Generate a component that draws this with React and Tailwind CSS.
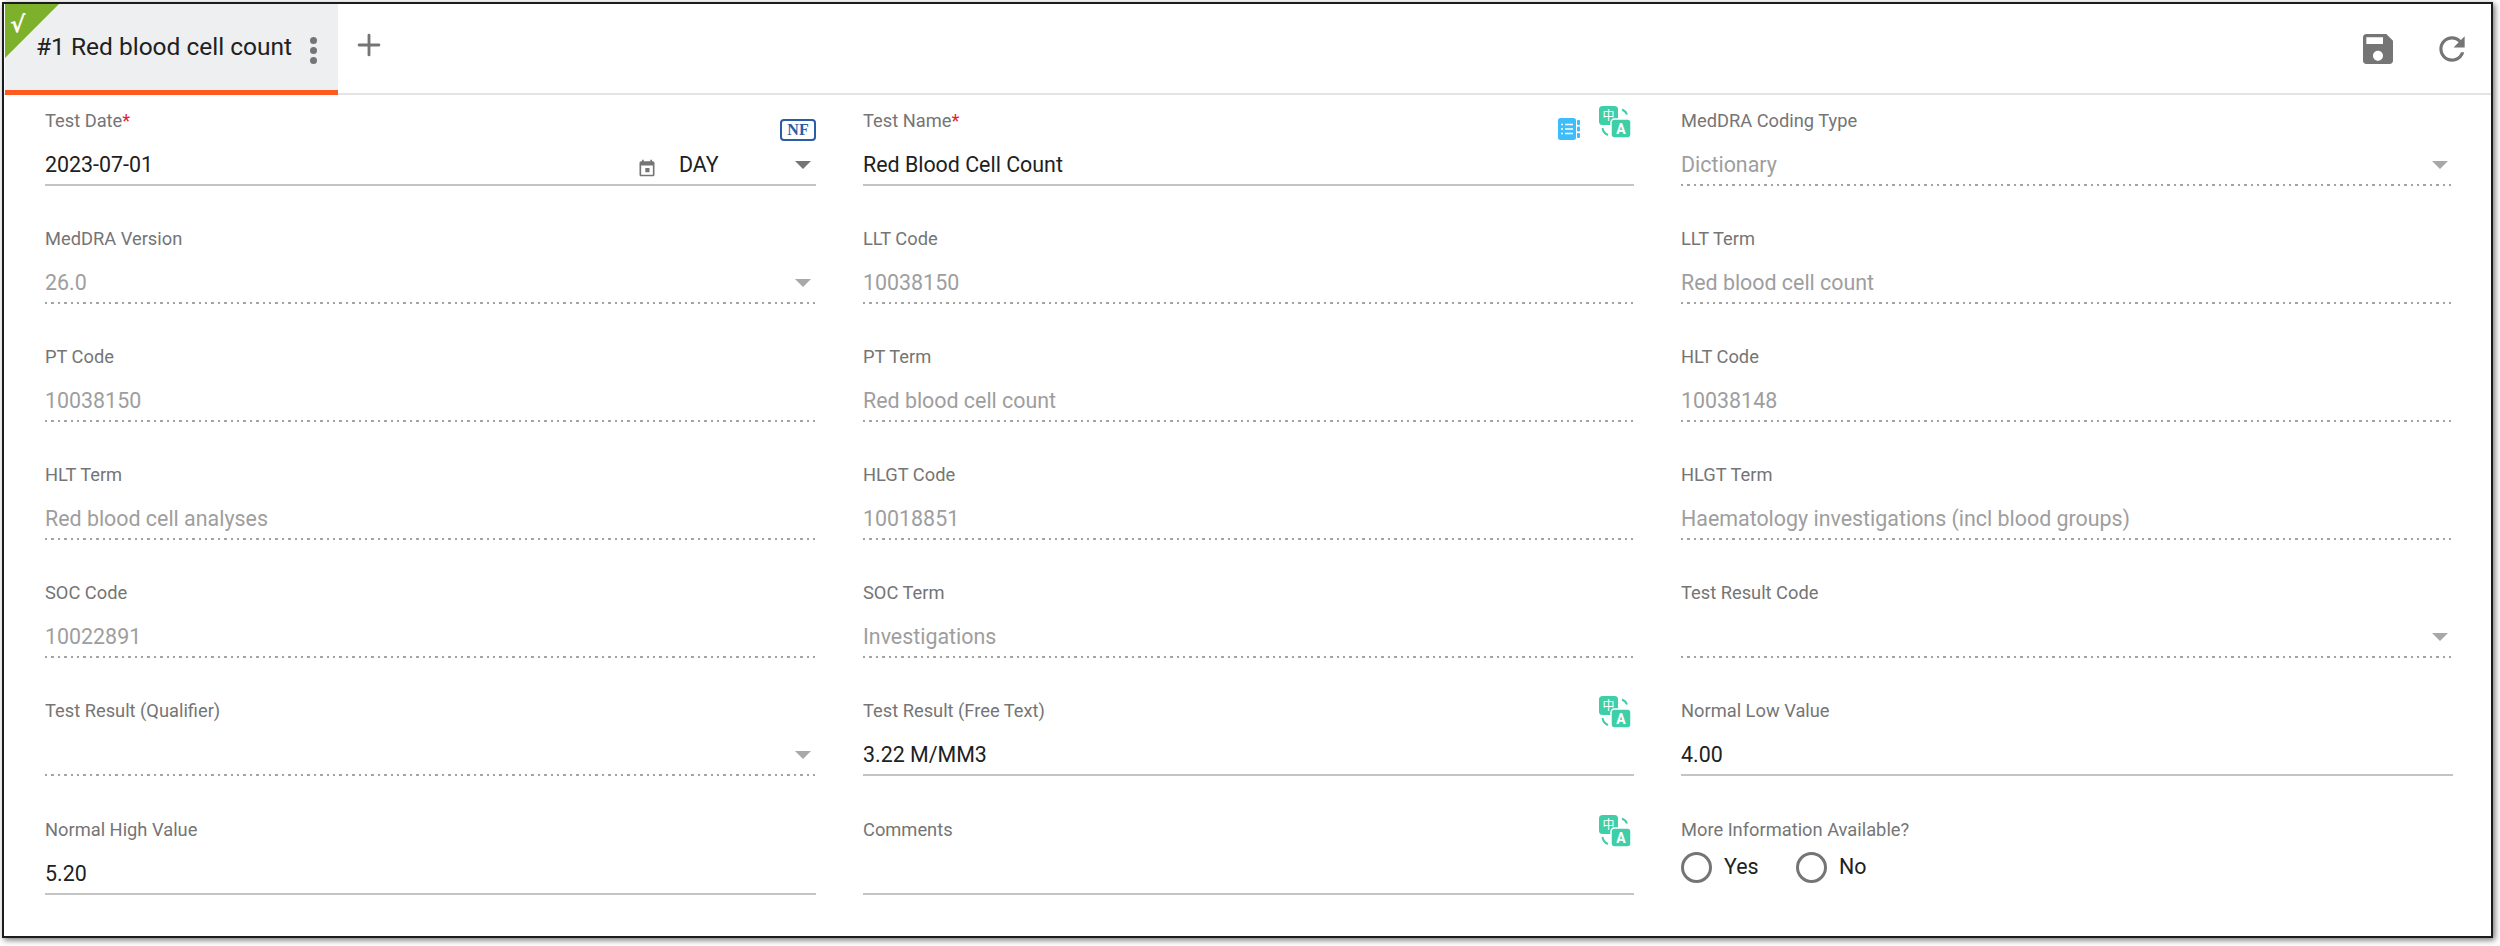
import React from "react";
import { Plus } from "lucide-react";

const Arrow = ({ disabled }) => (
  <span
    className={`w-0 h-0 border-x-[8px] border-x-transparent border-t-[8px] mr-[5px] ${
      disabled ? "border-t-[#a8a8a8]" : "border-t-[#757575]"
    }`}
  />
);

const TranslateIcon = () => (
  <svg width="33" height="33" viewBox="0 0 33 33">
    <path d="M23 3.5a9 9 0 0 1 5 5M3.5 22a9 9 0 0 0 5.5 7" fill="none" stroke="#3fcfa8" strokeWidth="2" />
    <rect x="0" y="0" width="19" height="19" rx="3.5" fill="#3fcfa8" />
    <rect x="12" y="13" width="20" height="19" rx="3.5" fill="#3fcfa8" stroke="#fff" strokeWidth="1.5" />
    <text x="9.5" y="14" textAnchor="middle" fontSize="12" fill="#fff" fontFamily="'Noto Sans CJK SC', sans-serif">中</text>
    <text x="22" y="28" textAnchor="middle" fontSize="14" fontWeight="700" fill="#fff" fontFamily="Roboto, sans-serif">A</text>
  </svg>
);

const NotebookIcon = () => (
  <svg width="22" height="22" viewBox="0 0 22 22">
    <rect x="0" y="0" width="18" height="22" rx="2.5" fill="#3dbdfb" />
    <rect x="19" y="2" width="3" height="5" rx="1" fill="#3dbdfb" />
    <rect x="19" y="8.5" width="3" height="5" rx="1" fill="#3dbdfb" />
    <rect x="19" y="15" width="3" height="5" rx="1" fill="#3dbdfb" />
    <path d="M7 6.5h8M7 11h8M7 15.5h8M3 6.5h2M3 11h2M3 15.5h2" stroke="#fff" strokeWidth="1.6" />
  </svg>
);

const Field = ({ label, required, value, disabled, select, icons }) => (
  <div className="relative h-[77px]">
    <div className="h-[24px] text-[18.3px] leading-[24px] text-[#757575]">
      {label}
      {required && <span className="text-[#e5202e]">*</span>}
    </div>
    <div
      className={`mt-[17px] h-[34px] pb-[5px] flex items-center justify-between text-[21.4px] leading-[30px] ${
        disabled ? "text-[#9e9e9e]" : "text-[#212121]"
      }`}
    >
      <span>{value}</span>
      {select && <Arrow disabled={disabled} />}
    </div>
    {disabled ? (
      <div className="h-[2px] bg-[repeating-linear-gradient(90deg,#a3a3a3_0_2.5px,transparent_2.5px_6.4px)]" />
    ) : (
      <div className="h-[2px] bg-[#c4c4c4]" />
    )}
    {icons && <div className="absolute right-[2px] top-[-3px] flex items-start">{icons}</div>}
  </div>
);

const TestDateField = () => (
  <div className="relative h-[77px]">
    <div className="h-[24px] text-[18.3px] leading-[24px] text-[#757575]">
      Test Date<span className="text-[#e5202e]">*</span>
    </div>
    <div className="mt-[17px] h-[36px] pb-[5px] flex items-center text-[21.4px] leading-[30px] text-[#212121] border-b-2 border-[#c4c4c4]">
      <span className="w-[614px] flex items-center justify-between">
        2023-07-01
        <svg width="20" height="20" viewBox="0 0 24 24" fill="#757575" className="mt-[6px] mr-[2px]">
          <path d="M19 4h-1V2h-2v2H8V2H6v2H5c-1.11 0-2 .9-2 2v14c0 1.1.89 2 2 2h14c1.1 0 2-.9 2-2V6c0-1.1-.9-2-2-2zm0 16H5V9h14v11zM10 12h5v5h-5z" />
        </svg>
      </span>
      <span className="ml-[20px] flex-1 flex items-center justify-between">
        DAY
        <Arrow />
      </span>
    </div>
    <div className="absolute right-0 top-[10px] w-[36px] h-[22px] border-2 border-[#2a5ca8] rounded-[4px] flex items-center justify-center text-[#2a5ca8] text-[16px] font-bold leading-none font-['Liberation_Serif',serif]">
      NF
    </div>
  </div>
);

export default function App() {
  return (
    <div className="w-[2500px] h-[946px] bg-white font-['Roboto',sans-serif] pl-[2px] pt-[2px]">
      <div className="w-[2491px] h-[936px] border-2 border-[#1c1c1c] bg-white shadow-[2px_2px_6px_rgba(0,0,0,0.55)]">
        <div className="h-[91px] flex items-start justify-between border-b-2 border-[#e4e4e4]">
          <div className="flex items-start">
            <div className="relative w-[333px] h-[91px] ml-[1px] bg-[#eeeff1] border-b-[5px] border-[#ff5a1f] flex items-center">
              <span className="absolute left-0 top-0 w-[54px] h-[54px] bg-[#7eb12b] [clip-path:polygon(0_0,100%_0,0_100%)]" />
              <span className="absolute left-[5px] top-[8px] text-white text-[23px] leading-[24px] font-bold font-['DejaVu_Sans',sans-serif]">√</span>
              <span className="ml-[31px] text-[24.5px] text-[#212121] mt-[1px]">#1 Red blood cell count</span>
              <span className="absolute left-[305px] top-[33px] flex flex-col gap-[3px]">
                <span className="w-[7px] h-[7px] rounded-full bg-[#757575]" />
                <span className="w-[7px] h-[7px] rounded-full bg-[#757575]" />
                <span className="w-[7px] h-[7px] rounded-full bg-[#757575]" />
              </span>
            </div>
            <Plus size={34} strokeWidth={2} color="#757575" className="ml-[14px] mt-[24px]" />
          </div>
          <div className="flex items-start gap-[35px] mt-[25px] mr-[20px]">
            <svg width="40" height="40" viewBox="0 0 24 24" fill="#757575">
              <path d="M17 3H5c-1.11 0-2 .9-2 2v14c0 1.1.89 2 2 2h14c1.1 0 2-.9 2-2V7l-4-4zm-5 16c-1.66 0-3-1.34-3-3s1.34-3 3-3 3 1.34 3 3-1.34 3-3 3zm3-10H5V5h10v4z" />
            </svg>
            <svg width="38" height="38" viewBox="0 0 24 24" fill="#757575" className="mt-[1px]">
              <path d="M17.65 6.35C16.2 4.9 14.21 4 12 4c-4.42 0-7.99 3.58-7.99 8s3.57 8 7.99 8c3.73 0 6.84-2.55 7.73-6h-2.08c-.82 2.33-3.04 4-5.65 4-3.31 0-6-2.69-6-6s2.69-6 6-6c1.66 0 3.14.69 4.22 1.78L13 11h7V4l-2.35 2.35z" />
            </svg>
          </div>
        </div>
        <div className="grid grid-cols-[771px_771px_772px] gap-x-[47px] pl-[41px] pt-[14px]">
          <TestDateField />
          <Field
            label="Test Name"
            required
            value="Red Blood Cell Count"
            icons={
              <>
                <span className="mt-[12px] mr-[19px]"><NotebookIcon /></span>
                <TranslateIcon />
              </>
            }
          />
          <Field label="MedDRA Coding Type" value="Dictionary" disabled select />

          <div className="col-span-3 grid grid-cols-subgrid gap-y-[41px] mt-[41px]">
            <Field label="MedDRA Version" value="26.0" disabled select />
            <Field label="LLT Code" value="10038150" disabled />
            <Field label="LLT Term" value="Red blood cell count" disabled />

            <Field label="PT Code" value="10038150" disabled />
            <Field label="PT Term" value="Red blood cell count" disabled />
            <Field label="HLT Code" value="10038148" disabled />

            <Field label="HLT Term" value="Red blood cell analyses" disabled />
            <Field label="HLGT Code" value="10018851" disabled />
            <Field label="HLGT Term" value="Haematology investigations (incl blood groups)" disabled />

            <Field label="SOC Code" value="10022891" disabled />
            <Field label="SOC Term" value="Investigations" disabled />
            <Field label="Test Result Code" value="" disabled select />

            <Field label="Test Result (Qualifier)" value="" disabled select />
            <Field label="Test Result (Free Text)" value="3.22 M/MM3" icons={<TranslateIcon />} />
            <Field label="Normal Low Value" value="4.00" />
          </div>

          <div className="col-span-3 grid grid-cols-subgrid mt-[42px]">
            <Field label="Normal High Value" value="5.20" />
            <Field label="Comments" value="" icons={<TranslateIcon />} />
            <div>
              <div className="h-[24px] text-[18.3px] leading-[24px] text-[#757575]">More Information Available?</div>
              <div className="mt-[9px] flex items-center text-[21.4px] text-[#212121]">
                <span className="w-[31px] h-[31px] rounded-full border-[3px] border-[#757575]" />
                <span className="ml-[12px] w-[72px]">Yes</span>
                <span className="w-[31px] h-[31px] rounded-full border-[3px] border-[#757575]" />
                <span className="ml-[12px]">No</span>
              </div>
            </div>
          </div>
        </div>
      </div>
    </div>
  );
}
